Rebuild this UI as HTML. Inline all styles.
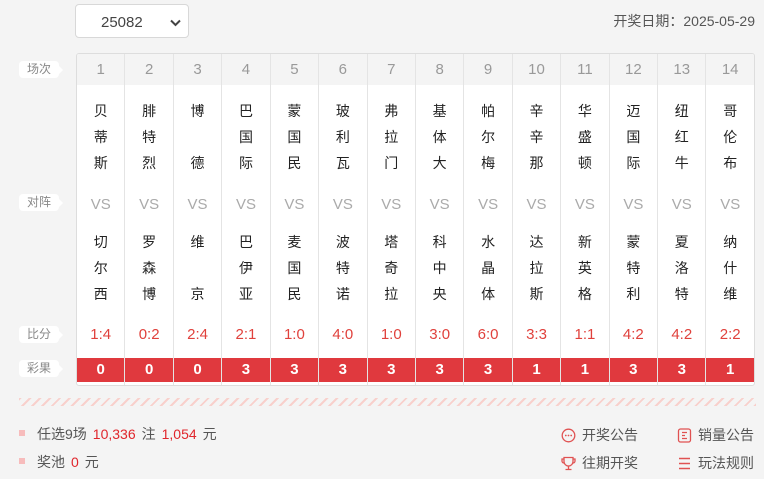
<!DOCTYPE html><html><head><meta charset="utf-8"><style>
*{margin:0;padding:0;box-sizing:border-box}
body{width:764px;height:479px;background:#f4f4f4;font-family:"Liberation Sans","Noto Sans CJK SC",sans-serif;position:relative;overflow:hidden;color:#333}
.sel{position:absolute;left:75px;top:4px;width:114px;height:34px;background:#fff;border:1px solid #d8d8d8;border-radius:4px;font-size:15px;color:#444;padding:9px 0 0 25px}
.sel svg{position:absolute;right:7px;top:14px}
.date{position:absolute;right:9px;top:11px;font-size:14px;color:#555}
.lab{position:absolute;left:19px;width:40px;height:17px;background:#fff;border-radius:4px;font-size:12px;color:#888;text-align:center;line-height:17px}
.lab:after{content:"";position:absolute;right:-4px;top:5px;border:4px solid transparent;border-left-color:#fff;border-right:0}
.tbl{position:absolute;left:76px;top:53px;width:679px;height:333px;background:#fff;border:1px solid #ddd;border-radius:3px;display:flex;overflow:hidden}
.col{flex:1;border-left:1px solid #e4e4e4;position:relative}
.col:first-child{border-left:0}
.h{height:31px;background:#f4f4f4;color:#999;font-size:15px;text-align:center;line-height:31px}
.t{position:absolute;left:0;right:0;display:flex;flex-direction:column;justify-content:space-between;align-items:center;font-size:14px;color:#222;height:72px}
.vs{position:absolute;top:142px;left:0;right:0;text-align:center;color:#aaa;font-size:15px}
.sc{position:absolute;top:272px;left:0;right:0;text-align:center;color:#e0413c;font-size:15px}
.r{position:absolute;top:304px;left:0;right:0;height:24px;background:#e0393e;color:#fff;font-weight:bold;font-size:15px;text-align:center;line-height:24px}
.hatch{position:absolute;left:19px;top:398px;width:737px;height:8px;background:repeating-linear-gradient(135deg,#f8d0cc 0 2px,transparent 2px 7px)}
.info{position:absolute;left:19px;font-size:14px;color:#555}
.info b{display:inline-block;width:6px;height:6px;background:#f7bcbc;margin-right:12px;vertical-align:3px}
.red{color:#e0262c;margin:0 6px}
.lk{position:absolute;font-size:14px;color:#555}
.lk svg{vertical-align:-3px;margin-right:6px}
</style></head><body>
<div class="sel">25082<svg width="11" height="8" viewBox="0 0 11 8"><path d="M1 1.5l4.5 4.5 4.5-4.5" stroke="#444" stroke-width="2" fill="none"/></svg></div>
<div class="date">开奖日期：2025-05-29</div>
<div class="lab" style="top:61px">场次</div>
<div class="lab" style="top:194px">对阵</div>
<div class="lab" style="top:326px">比分</div>
<div class="lab" style="top:360px">彩果</div>
<div class="tbl" id="t"></div>
<div class="hatch"></div>
<div class="info" style="top:424px"><b></b>任选9场<span class="red">10,336</span>注<span class="red">1,054</span>元</div>
<div class="info" style="top:452px"><b></b>奖池<span class="red">0</span>元</div>
<div class="lk" style="left:561px;top:425px"><svg width="15" height="15" viewBox="0 0 15 15"><circle cx="7.5" cy="7.5" r="6.3" stroke="#e05252" stroke-width="1.3" fill="none"/><circle cx="4.8" cy="7.5" r=".9" fill="#e05252"/><circle cx="7.5" cy="7.5" r=".9" fill="#e05252"/><circle cx="10.2" cy="7.5" r=".9" fill="#e05252"/></svg>开奖公告</div>
<div class="lk" style="left:677px;top:425px"><svg width="15" height="15" viewBox="0 0 15 15"><rect x="1.5" y="1" width="12" height="13" rx="2" stroke="#e05252" stroke-width="1.3" fill="none"/><path d="M5 4.5h5M5 7.5h3M5 10.5h5" stroke="#e05252" stroke-width="1.2"/></svg>销量公告</div>
<div class="lk" style="left:561px;top:453px"><svg width="15" height="15" viewBox="0 0 15 15"><path d="M3 1.5h9v4a4.5 4.5 0 0 1-9 0zM3 3H1v2a2 2 0 0 0 2 2M12 3h2v2a2 2 0 0 1-2 2M7.5 10v3M4.5 13.5h6" stroke="#e05252" stroke-width="1.3" fill="none"/></svg>往期开奖</div>
<div class="lk" style="left:677px;top:453px"><svg width="15" height="15" viewBox="0 0 15 15"><path d="M2 2.5h11M2 7.5h11M2 12.5h11" stroke="#e05252" stroke-width="1.5"/></svg>玩法规则</div>
<script>
var h=["贝蒂斯","腓特烈","博德","巴国际","蒙国民","玻利瓦","弗拉门","基体大","帕尔梅","辛辛那","华盛顿","迈国际","纽红牛","哥伦布"];
var a=["切尔西","罗森博","维京","巴伊亚","麦国民","波特诺","塔奇拉","科中央","水晶体","达拉斯","新英格","蒙特利","夏洛特","纳什维"];
var s=["1:4","0:2","2:4","2:1","1:0","4:0","1:0","3:0","6:0","3:3","1:1","4:2","4:2","2:2"];
var r=[0,0,0,3,3,3,3,3,3,1,1,3,3,1];
var o="";
for(var i=0;i<14;i++){
 var ht=h[i].split("").map(c=>"<span>"+c+"</span>").join("");
 var at=a[i].split("").map(c=>"<span>"+c+"</span>").join("");
 o+='<div class="col"><div class="h">'+(i+1)+'</div><div class="t" style="top:47px">'+ht+'</div><div class="vs">VS</div><div class="t" style="top:178px">'+at+'</div><div class="sc">'+s[i]+'</div><div class="r">'+r[i]+'</div></div>';
}
document.getElementById("t").innerHTML=o;
</script>
</body></html>
